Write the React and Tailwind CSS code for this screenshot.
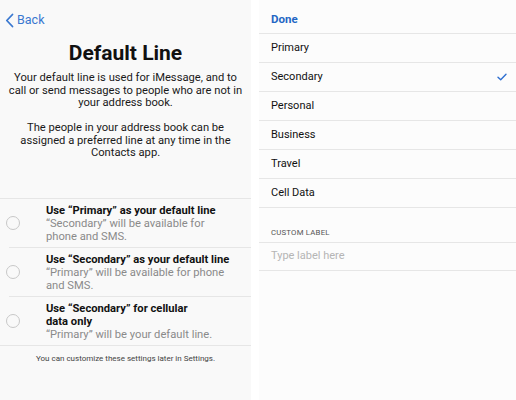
import React from "react";

const options = [
  {
    title: ["Use \u201cPrimary\u201d as your default line"],
    sub: ["\u201cSecondary\u201d will be available for", "phone and SMS."],
  },
  {
    title: ["Use \u201cSecondary\u201d as your default line"],
    sub: ["\u201cPrimary\u201d will be available for phone", "and SMS."],
  },
  {
    title: ["Use \u201cSecondary\u201d for cellular", "data only"],
    sub: ["\u201cPrimary\u201d will be your default line."],
  },
];

const labels = ["Primary", "Secondary", "Personal", "Business", "Travel", "Cell Data"];

const lines = (arr) =>
  arr.map((t, i) => (
    <React.Fragment key={i}>
      {i > 0 && <br />}
      {t}
    </React.Fragment>
  ));

function DefaultLine() {
  return (
    <div className="w-[251px] h-full bg-[#f9f9f9] flex flex-col">
      {/* back */}
      <div className="h-[40px] pl-[5px] pt-[12px] flex items-start">
        <div className="flex items-center gap-[3px] text-[#3a78d0] text-[12.5px] leading-[16px]">
          <svg width="9" height="15" viewBox="0 0 9 15" fill="none">
            <path d="M7.5 1.5 L1.8 7.5 L7.5 13.5" stroke="#3a78d0" strokeWidth="1.8" strokeLinecap="round" strokeLinejoin="round" />
          </svg>
          <span>Back</span>
        </div>
      </div>

      <h1 className="text-center font-bold text-[21px] leading-[26px] text-[#111]">Default Line</h1>

      <div className="mt-[6px] text-center text-[11.2px] leading-[12.5px] text-[#1a1a1a] whitespace-nowrap">
        <p>{lines(["Your default line is used for iMessage, and to", "call or send messages to people who are not in", "your address book."])}</p>
        <p className="mt-[12.5px]">{lines(["The people in your address book can be", "assigned a preferred line at any time in the", "Contacts app."])}</p>
      </div>

      <div className="mt-[38px] border-t border-[#e6e6e6]">
        {options.map((o, i) => (
          <div key={i} className="flex items-center h-[49px] relative">
            <div className="w-[46px] pl-[6px]">
              <div className="w-[14px] h-[14px] rounded-full border border-[#c8c8c8]" />
            </div>
            <div className="flex-1 text-[11.2px] leading-[13px] whitespace-nowrap">
              <div className="font-bold text-[#111]">{lines(o.title)}</div>
              <div className="text-[#8a8a8a]">{lines(o.sub)}</div>
            </div>
            <div className={"absolute bottom-0 right-0 border-b border-[#e6e6e6] " + (i === 2 ? "left-0" : "left-[9px]")} />
          </div>
        ))}
      </div>

      <p className="mt-[8px] text-center text-[8px] leading-[10px] text-[#444]">
        You can customize these settings later in Settings.
      </p>
    </div>
  );
}

function LabelPicker() {
  return (
    <div className="flex-1 h-full bg-[#fcfcfc] flex flex-col">
      <div className="h-[34px] border-b border-[#e6e6e6] pl-[12px] flex items-center">
        <span className="text-[#2366c4] font-bold text-[11.5px] leading-[14px] mt-[4px]">Done</span>
      </div>
      {labels.map((l) => (
        <div key={l} className="h-[29px] border-b border-[#e6e6e6] pl-[12px] pr-[9px] flex items-center justify-between text-[11px] text-[#111]">
          <span>{l}</span>
          {l === "Secondary" && (
            <svg width="10" height="8" viewBox="0 0 10 8" fill="none">
              <path d="M1 4.2 L3.7 6.8 L9 1.2" stroke="#2f6fd0" strokeWidth="1.4" strokeLinecap="round" strokeLinejoin="round" />
            </svg>
          )}
        </div>
      ))}
      <div className="h-[34px] pl-[12px] flex items-end pb-[3px] text-[7.8px] text-[#555] tracking-[0.2px]">CUSTOM LABEL</div>
      <div className="h-[29px] border-y border-[#e6e6e6] pl-[12px] flex items-center text-[11px] text-[#b5b5b5]">
        Type label here
      </div>
    </div>
  );
}

export default function App() {
  return (
    <div className="w-[516px] h-[400px] bg-white flex gap-[8px] overflow-hidden" style={{ fontFamily: "Roboto, 'Noto Sans', sans-serif" }}>
      <DefaultLine />
      <LabelPicker />
    </div>
  );
}
